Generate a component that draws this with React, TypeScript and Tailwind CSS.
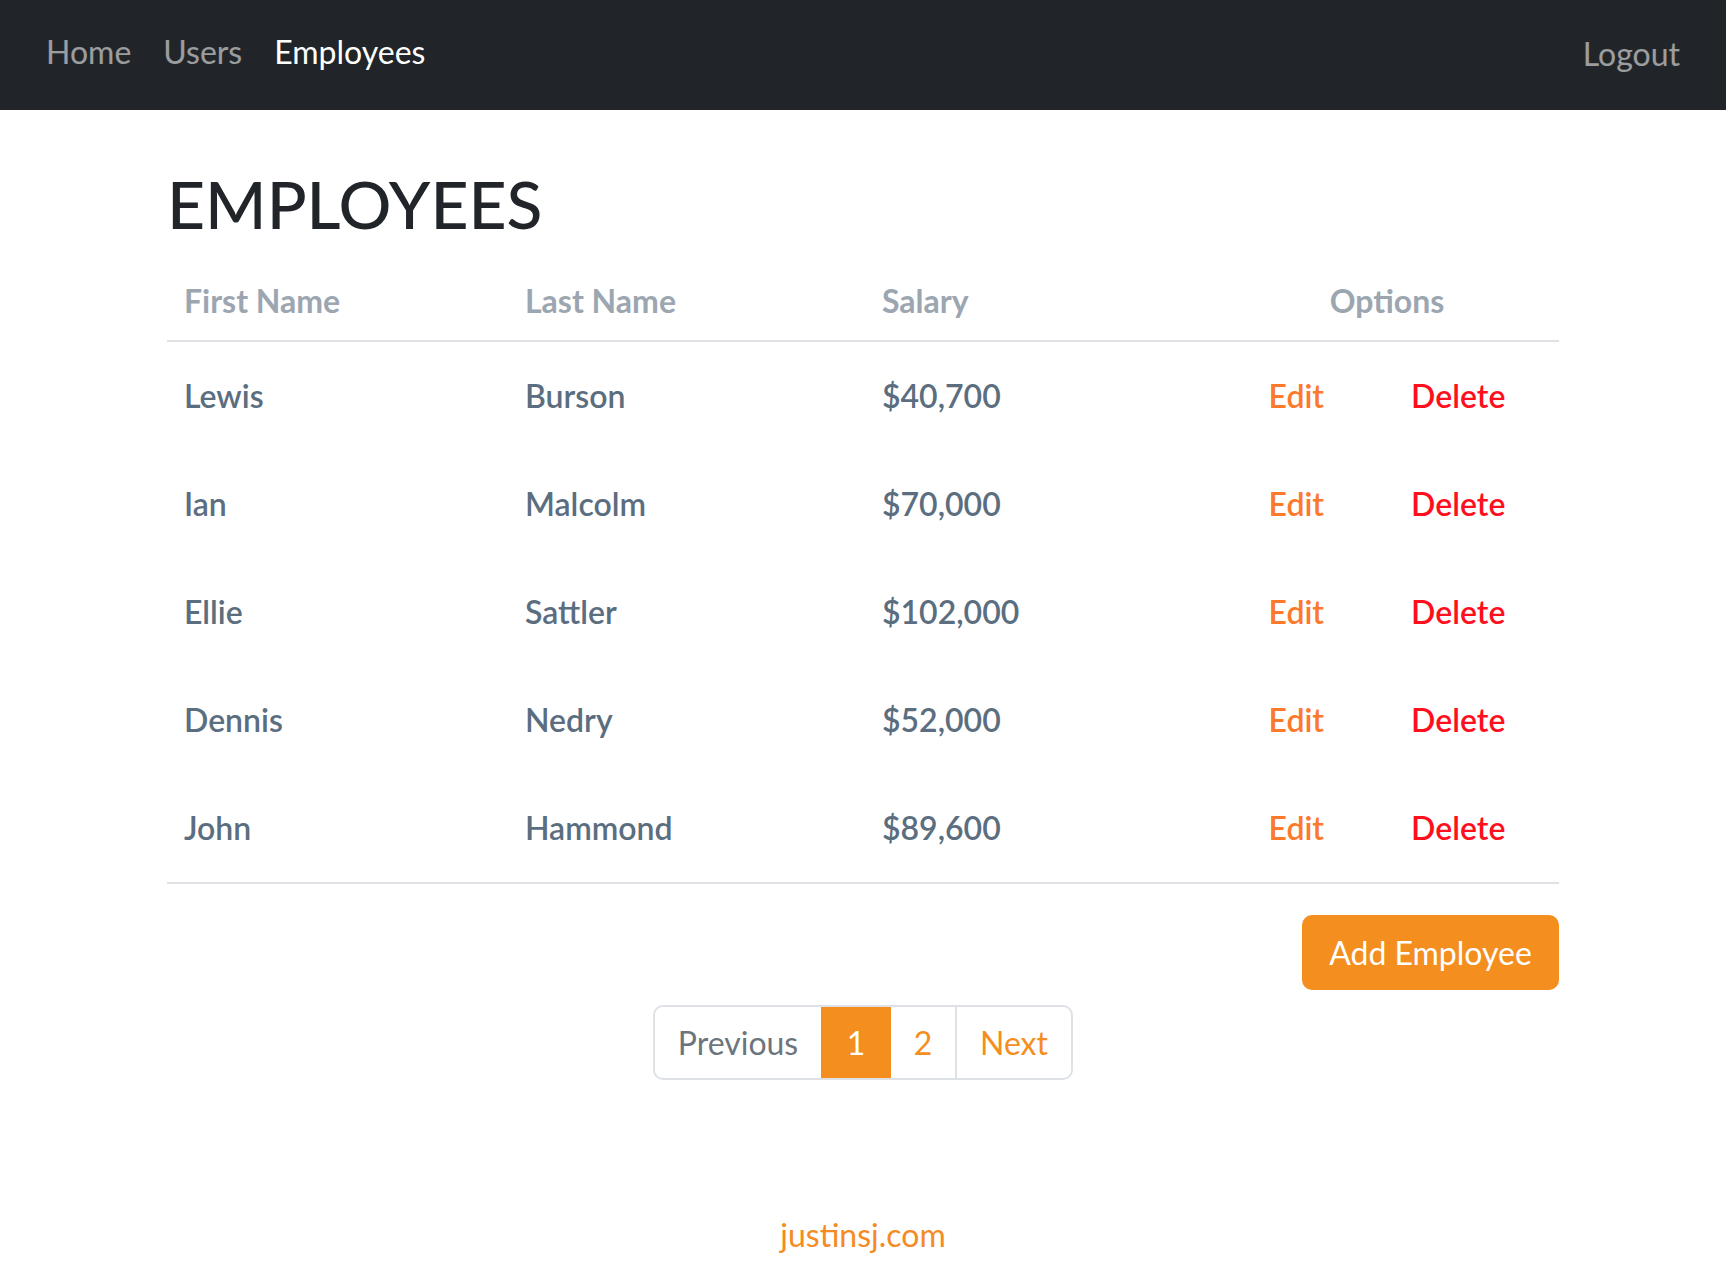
import React from "react";

// ─── Data ─────────────────────────────────────────────────────────────────────

const employees = [
  { first: "Lewis", last: "Burson", salary: "$40,700" },
  { first: "Ian", last: "Malcolm", salary: "$70,000" },
  { first: "Ellie", last: "Sattler", salary: "$102,000" },
  { first: "Dennis", last: "Nedry", salary: "$52,000" },
  { first: "John", last: "Hammond", salary: "$89,600" },
];

const font = { fontFamily: "Lato, 'Open Sans', 'Noto Sans', sans-serif" };

// ─── Navbar ───────────────────────────────────────────────────────────────────

function Navbar() {
  return (
    <nav className="h-[110px] bg-[#212529] flex items-center justify-between px-[46px] pb-[6px] text-[32px] leading-[48px]">
      <div className="flex items-center gap-[32px]">
        <a href="#" className="text-white/55">
          Home
        </a>
        <a href="#" className="text-white/55">
          Users
        </a>
        <a href="#" className="text-white">
          Employees
        </a>
      </div>
      <a href="#" className="text-white/55 mt-[4px]">
        Logout
      </a>
    </nav>
  );
}

// ─── Table ────────────────────────────────────────────────────────────────────

function EmployeeTable() {
  return (
    <div className="text-[32px] leading-[48px]">
      {/* Header */}
      <div className="grid grid-cols-[341px_357px_350px_1fr] pt-[16px] pb-[15px] border-b-2 border-[#dee2e6] font-bold text-[#9ba6b1]">
        <div className="pl-[17px]">First Name</div>
        <div className="pl-[17px]">Last Name</div>
        <div className="pl-[17px]">Salary</div>
        <div className="text-center">Options</div>
      </div>

      {/* Rows */}
      <div className="border-b-2 border-[#dee2e6]">
        {employees.map((e) => (
          <div
            key={e.first}
            className="grid grid-cols-[341px_357px_350px_1fr] h-[108px] items-center font-semibold text-[#5b6e7f]"
          >
            <div className="pl-[17px]">{e.first}</div>
            <div className="pl-[17px]">{e.last}</div>
            <div className="pl-[17px]">{e.salary}</div>
            <div className="flex justify-center gap-[87px]">
              <a href="#" className="text-[#fd7a2c]">
                Edit
              </a>
              <a href="#" className="text-[#ff0f1e]">
                Delete
              </a>
            </div>
          </div>
        ))}
      </div>
    </div>
  );
}

// ─── Pagination ───────────────────────────────────────────────────────────────

function Pagination() {
  return (
    <div className="flex justify-center mt-[15px]">
      <div className="flex h-[75px] border-2 border-[#dee2e6] rounded-[10px] overflow-hidden text-[32px]">
        <a href="#" className="w-[166px] flex items-center justify-center text-[#6c757d]">
          Previous
        </a>
        <a href="#" className="w-[70px] flex items-center justify-center bg-[#f48e1f] text-white">
          1
        </a>
        <a href="#" className="w-[66px] flex items-center justify-center text-[#f48e1f] border-r-2 border-[#dee2e6]">
          2
        </a>
        <a href="#" className="w-[114px] flex items-center justify-center text-[#f48e1f]">
          Next
        </a>
      </div>
    </div>
  );
}

// ─── App ──────────────────────────────────────────────────────────────────────

export default function App() {
  return (
    <div className="min-h-screen bg-white" style={font}>
      <Navbar />

      <main className="w-[1392px] mx-auto">
        <h1 className="mt-[52px] mb-[15px] text-[66px] leading-[84px] font-medium text-[#212529]">
          EMPLOYEES
        </h1>

        <EmployeeTable />

        <div className="flex justify-end mt-[31px]">
          <button className="w-[257px] h-[75px] rounded-[10px] bg-[#f48e1f] text-white text-[32px]">
            Add Employee
          </button>
        </div>

        <Pagination />

        <footer className="mt-[131px] text-center text-[32px] leading-[48px] text-[#f58b22]">
          justinsj.com
        </footer>
      </main>
    </div>
  );
}
